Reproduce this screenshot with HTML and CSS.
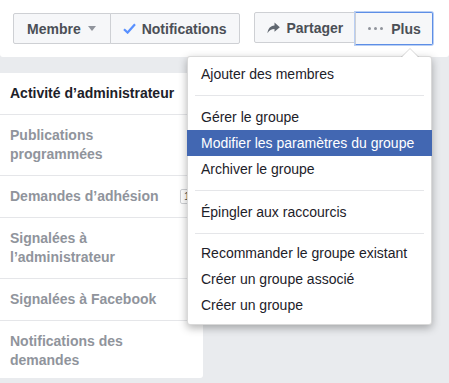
FILE: index.html
```html
<!DOCTYPE html>
<html lang="fr">
<head>
    <meta charset="UTF-8">
    <title>Groupe</title>
    <link rel="stylesheet" href="styles.css">
</head>
<body>
    <header class="header">
        <div class="btn-group">
            <button class="btn btn-member">Membre <span class="caret"></span></button>
            <button class="btn btn-notif">
                <svg class="icon" width="13" height="11" viewBox="0 0 13 11"><path d="M1 6.2 L4.6 9.6 L12 1.2" fill="none" stroke="#5890ff" stroke-width="2.2"/></svg>
                Notifications
            </button>
        </div>
        <div class="btn-group btn-group-right">
            <button class="btn btn-share">
                <svg class="icon" width="13" height="12" viewBox="0 0 13 12"><path d="M7.5 0.5 L12.8 5.2 L7.5 9.8 L7.5 7 C4.5 7 2.2 8.2 0.5 11.2 C0.9 6.8 3.2 3.8 7.5 3.5 Z" fill="#606770"/></svg>
                Partager
            </button>
            <button class="btn btn-focus">
                <span class="dots"><i></i><i></i><i></i></span>
                Plus
            </button>
        </div>
    </header>

    <main class="main">
        <nav class="sidebar">
            <a class="side-item active">Activité d’administrateur</a>
            <a class="side-item"><span class="label">Publications programmées</span></a>
            <a class="side-item"><span class="label">Demandes d’adhésion</span><span class="badge">1</span></a>
            <a class="side-item"><span class="label">Signalées à l’administrateur</span></a>
            <a class="side-item"><span class="label">Signalées à Facebook</span></a>
            <a class="side-item"><span class="label">Notifications des demandes</span></a>
        </nav>
    </main>

    <ul class="menu">
        <li class="menu-item">Ajouter des membres</li>
        <li class="menu-sep"></li>
        <li class="menu-item">Gérer le groupe</li>
        <li class="menu-item selected">Modifier les paramètres du groupe</li>
        <li class="menu-item">Archiver le groupe</li>
        <li class="menu-sep"></li>
        <li class="menu-item">Épingler aux raccourcis</li>
        <li class="menu-sep menu-sep-last"></li>
        <li class="menu-item">Recommander le groupe existant</li>
        <li class="menu-item">Créer un groupe associé</li>
        <li class="menu-item">Créer un groupe</li>
    </ul>
</body>
</html>
```

FILE: styles.css
```css
* {
    margin: 0;
    padding: 0;
    box-sizing: border-box;
}

body {
    font-family: 'Liberation Sans', Arial, sans-serif;
    font-size: 14px;
    color: #1d2129;
    background-color: #e9ebee;
    height: 383px;
    overflow: hidden;
}

.header {
    display: flex;
    align-items: center;
    height: 57px;
    padding: 0 13px;
    background-color: #ffffff;
    border-radius: 0 0 3px 3px;
}

.btn-group {
    display: flex;
}

.btn-group-right {
    margin-left: 14px;
}

.btn {
    display: inline-flex;
    align-items: center;
    gap: 6px;
    height: 31px;
    padding: 0 12px;
    font-family: inherit;
    font-size: 14px;
    font-weight: bold;
    color: #4b4f56;
    background-color: #f6f7f9;
    border: 1px solid #ced0d4;
    border-radius: 2px;
}

.btn-member {
    padding: 0 14px 0 13px;
}

.btn-notif {
    padding: 0 13px 0 12px;
}

.btn-share {
    padding: 0 12px;
    gap: 6px;
}

.btn + .btn {
    border-left: 1px solid #ced0d4;
    margin-left: -1px;
}

.btn-group .btn:first-child {
    border-top-right-radius: 0;
    border-bottom-right-radius: 0;
}

.btn-group .btn:last-child {
    border-top-left-radius: 0;
    border-bottom-left-radius: 0;
}

.btn-focus {
    position: relative;
    height: 33px;
    padding: 0 11px 0 12px;
    border: 1px solid #5d8ee6;
    box-shadow: 0 0 0 1px #b9cff4;
}

.caret {
    width: 0;
    height: 0;
    border-left: 4.5px solid transparent;
    border-right: 4.5px solid transparent;
    border-top: 5px solid #90949c;
    margin-left: 1px;
}

.dots {
    display: inline-flex;
    gap: 3px;
    margin-right: 2px;
}

.dots i {
    width: 3px;
    height: 3px;
    border-radius: 50%;
    background-color: #90949c;
}

.main {
    padding-top: 16px;
}

.sidebar {
    width: 203px;
    height: 305px;
    background-color: #ffffff;
    border-radius: 0 3px 3px 0;
    overflow: hidden;
}

.side-item {
    display: flex;
    align-items: flex-start;
    padding: 11px 10px;
    line-height: 19px;
    font-weight: bold;
    color: #90949c;
    border-bottom: 1px solid #e5e6e9;
}

.side-item:last-child {
    border-bottom: none;
}

.side-item.active {
    color: #1d2129;
}

.label {
    max-width: 168px;
}

.badge {
    margin-left: auto;
    margin-right: -1px;
    margin-top: 2px;
    padding: 0 3px;
    height: 15px;
    line-height: 13px;
    font-size: 11px;
    font-weight: normal;
    color: #4b4f56;
    border: 1px solid #ced0d4;
    border-radius: 2px;
}

.menu {
    position: absolute;
    left: 187px;
    top: 56px;
    width: 245px;
    list-style: none;
    padding: 4px 0 6px;
    background-color: #ffffff;
    border: 1px solid rgba(0, 0, 0, 0.15);
    border-radius: 3px;
    box-shadow: 0 3px 8px rgba(0, 0, 0, 0.3);
}

.menu::before {
    content: "";
    position: absolute;
    top: -9px;
    left: 213px;
    width: 0;
    height: 0;
    border-left: 9px solid transparent;
    border-right: 9px solid transparent;
    border-bottom: 9px solid rgba(0, 0, 0, 0.15);
}

.menu::after {
    content: "";
    position: absolute;
    top: -8px;
    left: 214px;
    width: 0;
    height: 0;
    border-left: 8px solid transparent;
    border-right: 8px solid transparent;
    border-bottom: 8px solid #ffffff;
}

.menu-item {
    height: 26px;
    line-height: 26px;
    padding: 0 13px;
    white-space: nowrap;
}

.menu-item.selected {
    background-color: #4267b2;
    color: #ffffff;
    margin: 0 -1px;
    padding: 0 14px;
}

.menu-sep {
    height: 1px;
    margin: 8px 7px;
    background-color: #e5e6e9;
}

.menu-sep-last {
    margin-bottom: 6px;
}
```
